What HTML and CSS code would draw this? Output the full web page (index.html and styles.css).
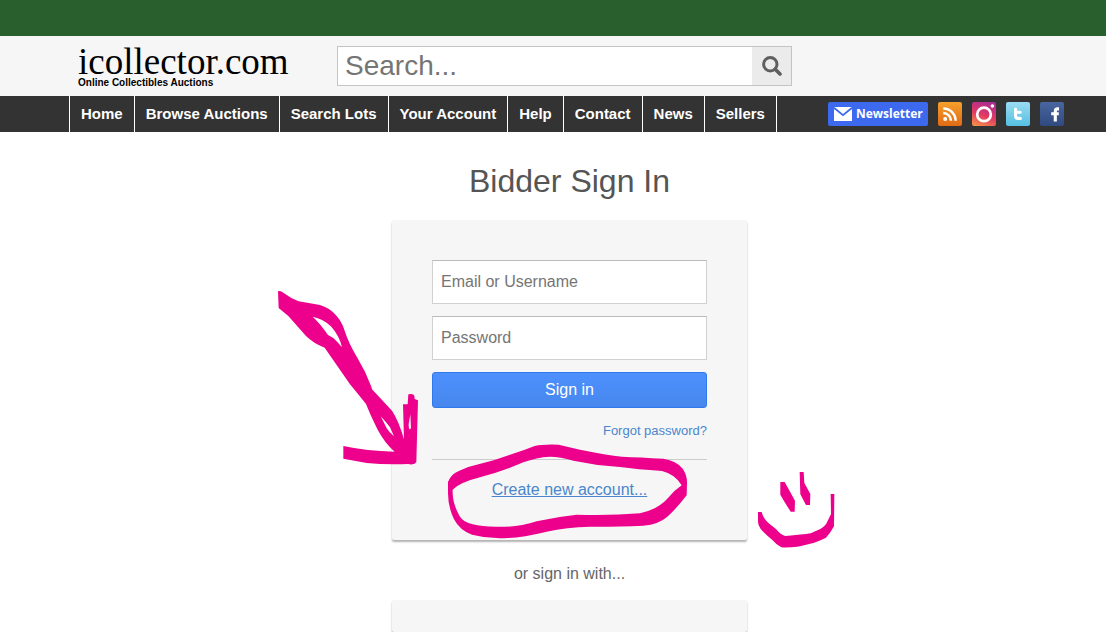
FILE: index.html
```
<!DOCTYPE html>
<html lang="en">
<head>
    <meta charset="UTF-8">
    <meta name="viewport" content="width=device-width, initial-scale=1.0">
    <title>Bidder Sign In - icollector.com</title>
    <link rel="stylesheet" href="styles.css">
</head>
<body>
    <div class="topbar"></div>

    <header class="header">
        <div class="wrap header-row">
            <a class="logo" href="#">
                <span class="logo-name">icollector.com</span>
                <span class="logo-tag">Online Collectibles Auctions</span>
            </a>
            <form class="search">
                <input type="text" placeholder="Search..." aria-label="Search">
                <button type="submit" aria-label="Search">
                    <svg width="20" height="20" viewBox="0 0 20 20">
                        <circle cx="8.3" cy="8.3" r="6.7" fill="none" stroke="#5f5f5f" stroke-width="3"/>
                        <path d="M13.2 13.2 L18 18" stroke="#5f5f5f" stroke-width="3.6" stroke-linecap="round"/>
                    </svg>
                </button>
            </form>
        </div>
    </header>

    <nav class="nav">
        <div class="wrap nav-row">
            <ul class="menu">
                <li><a href="#">Home</a></li>
                <li><a href="#">Browse Auctions</a></li>
                <li><a href="#">Search Lots</a></li>
                <li><a href="#">Your Account</a></li>
                <li><a href="#">Help</a></li>
                <li><a href="#">Contact</a></li>
                <li><a href="#">News</a></li>
                <li><a href="#">Sellers</a></li>
            </ul>
            <div class="social">
                <a class="newsletter" href="#">
                    <svg width="18" height="14" viewBox="0 0 18 14">
                        <rect width="18" height="14" fill="#fff"/>
                        <path d="M0 0.8 L9 8.2 L18 0.8" fill="none" stroke="#3c69ee" stroke-width="1.8"/>
                    </svg>
                    Newsletter
                </a>
                <a class="rss" href="#" aria-label="RSS">
                    <svg width="24" height="24" viewBox="0 0 24 24">
                        <circle cx="7.2" cy="17" r="2" fill="#fff"/>
                        <path d="M5.3 11 A7.8 7.8 0 0 1 13 18.8 M5.3 6.4 A12.4 12.4 0 0 1 17.6 18.8" fill="none" stroke="#fff" stroke-width="2.5"/>
                    </svg>
                </a>
                <a class="instagram" href="#" aria-label="Instagram">
                    <svg width="24" height="24" viewBox="0 0 24 24">
                        <circle cx="12" cy="12.4" r="6.8" fill="none" stroke="#fff" stroke-width="2.7"/>
                        <circle cx="20.4" cy="4" r="1.8" fill="#fff"/>
                    </svg>
                </a>
                <a class="twitter" href="#" aria-label="Twitter">
                    <svg width="24" height="24" viewBox="0 0 24 24">
                        <path d="M9.6 7 V14 Q9.6 16.4 12 16.4 H14.4 M9.6 10.2 H14.2" fill="none" stroke="#fff" stroke-width="3.1" stroke-linecap="round" stroke-linejoin="round"/>
                    </svg>
                </a>
                <a class="facebook" href="#" aria-label="Facebook">
                    <svg width="24" height="24" viewBox="0 0 24 24">
                        <path d="M15.3 19.4 V9.4 Q15.3 6.9 17.6 6.9 H19 M11.2 11.8 H18.8" fill="none" stroke="#fff" stroke-width="3.1"/>
                    </svg>
                </a>
            </div>
        </div>
    </nav>

    <main class="wrap content">
        <h1>Bidder Sign In</h1>

        <form class="card">
            <input type="text" placeholder="Email or Username" aria-label="Email or Username">
            <input type="password" placeholder="Password" aria-label="Password">
            <button type="submit">Sign in</button>
            <a class="forgot" href="#">Forgot password?</a>
            <hr>
            <a class="create" href="#">Create new account...</a>

            <!-- hand-drawn marker strokes over the form -->
            <svg class="marker" viewBox="0 0 1740 840">
                <!-- arrow -->
                <path fill-rule="evenodd" d="M24 34 Q32 31 40 38 Q64 56 86 64 L150 75 Q178 83 198 106 Q216 126 224 152 Q236 190 262 233 Q288 276 304 320 L306 328 L366 392 Q386 422 402 478 L399 373 L413 373 L415 343 Q430 339 433 347 L434 357 L444 361 L439 546 Q434 556 414 552 Q350 555 290 549 L220 536 L220 498 Q290 513 374 515 Q345 490 323 449 Q302 408 288 372 Q264 342 240 313 L164 203 Q130 190 108 168 L55 108 L26 84 Z
                    M128 110 Q160 116 184 140 Q209 169 216 202 Q204 187 190 174 L174 165 Q150 130 128 110 Z
                    M332 409 Q350 428 360 442 L372 469 Q358 458 350 445 Z
                    M421 403 L423 444 Q416 456 416 432 Z"/>
                <!-- loop round the account link -->
                <path transform="translate(330 240)" fill-rule="evenodd" d="M204 366 Q212 342 238 332 Q260 320 290 314 Q340 303 390 284 Q430 272 464 258 Q490 252 536 254 L600 269 Q680 285 726 290 Q780 292 850 296 Q890 302 908 326 Q922 346 921 370 L920 406 Q890 445 862 470 Q836 493 790 497 Q700 501 630 500 Q560 502 500 515 Q430 532 384 534 Q330 538 276 524 Q240 512 222 478 Q204 440 204 400 Z
                    M218 389 Q240 367 300 352 Q370 333 430 307 Q470 292 510 290 Q540 290 580 302 Q650 317 720 321 Q770 328 846 333 Q886 343 905 376 Q880 393 864 414 Q834 448 780 460 Q690 467 590 464 Q530 470 470 484 Q420 501 370 500 Q310 502 278 493 Q250 486 240 470 Q216 430 218 389 Z"/>
                <!-- smile -->
                <g transform="translate(1440 555)">
                    <path d="M91 51 H104 L135 107 L134 140 H122 Q104 112 91 89 Z"/>
                    <path d="M149 21 H161 L163 54 L181 87 L180 120 H168 L151 88 Z"/>
                    <path d="M24 141 H35 Q40 162 58 176 L78 192 Q90 208 106 213 Q158 209 182 205 L211 192 Q228 181 231 172 L243 147 L242 87 H253 L252 184 Q242 203 228 218 Q200 232 180 236 Q130 250 94 247 Q80 240 67 225 Q45 207 32 192 Q24 181 24 170 Z"/>
                </g>
            </svg>
        </form>

        <p class="or">or sign in with...</p>

        <section class="card providers"></section>
    </main>
</body>
</html>
```
FILE: styles.css
```
* {
    margin: 0;
    padding: 0;
    box-sizing: border-box;
}

body {
    display: flex;
    flex-direction: column;
    min-height: 100vh;
    background: #fff;
    color: #555;
    font-family: "Liberation Sans", Arial, Helvetica, sans-serif;
    font-size: 16px;
    line-height: 20px;
    overflow-x: hidden;
}

input,
button {
    font-family: inherit;
    font-size: 16px;
}

input::placeholder {
    color: #757575;
    opacity: 1;
}

.topbar {
    height: 36px;
    background: #285f2c;
}

.header {
    background: #f6f6f6;
}

.nav {
    background: #333;
}

/* the site column sits a little right of the middle */
.header,
.nav,
.content {
    padding-left: 33px;
}

.wrap {
    width: 100%;
    max-width: 1001px;
    margin: 0 auto;
}

/* Header */
.header-row {
    display: flex;
    align-items: center;
    height: 60px;
}

.logo {
    display: flex;
    flex-direction: column;
    width: 268px;
    padding-left: 9px;
    color: #000;
    text-decoration: none;
}

.logo-name {
    font-family: "Liberation Serif", "Times New Roman", serif;
    font-size: 37px;
    line-height: 34px;
}

.logo-tag {
    font-size: 10px;
    font-weight: bold;
    line-height: 8px;
}

.search {
    display: flex;
    width: 455px;
    height: 40px;
    border: 1px solid #c4c4c4;
}

.search input {
    flex: 1;
    min-width: 0;
    padding: 0 7px;
    border: none;
    background: #fff;
    font-size: 28px;
}

.search button {
    display: flex;
    align-items: center;
    justify-content: center;
    width: 39px;
    border: none;
    background: #ebebeb;
    cursor: pointer;
}

/* Navigation */
.nav-row {
    display: flex;
    align-items: center;
    height: 36px;
}

.menu {
    display: flex;
    list-style: none;
    border-right: 1px solid #fff;
}

.menu a {
    display: block;
    padding: 0 11px;
    border-left: 1px solid #fff;
    color: #fff;
    font-size: 15px;
    font-weight: bold;
    line-height: 36px;
    text-decoration: none;
    white-space: nowrap;
}

.social {
    display: flex;
    gap: 10px;
    margin-left: auto;
    padding-right: 6px;
}

.social a {
    width: 24px;
    height: 24px;
    border-radius: 2px;
}

.social svg {
    display: block;
}

.social .newsletter {
    display: flex;
    align-items: center;
    gap: 4px;
    width: 100px;
    padding-left: 6px;
    background: #3c69ee;
    color: #fff;
    font-family: "Open Sans", "Noto Sans", sans-serif;
    font-size: 12px;
    font-weight: bold;
    text-decoration: none;
}

.rss {
    background: linear-gradient(#f6a02c, #e06a14);
}

.instagram {
    background: linear-gradient(20deg, #f59a45, #e23a62 45%, #a32a9c);
}

.twitter {
    background: linear-gradient(#9adcf2, #55bfe2);
}

.facebook {
    background: linear-gradient(#4a66a0, #2f4a80);
}

/* Sign in */
.content {
    display: flex;
    flex: 1;
    flex-direction: column;
    align-items: center;
    max-width: 1034px;
    padding-top: 29px;
}

h1 {
    margin-bottom: 19px;
    font-size: 32px;
    font-weight: normal;
    line-height: 40px;
}

.card {
    position: relative;
    display: flex;
    flex-direction: column;
    width: 355px;
    max-width: 100%;
    padding: 40px;
    border-radius: 2px;
    background: #f6f6f6;
    box-shadow: 0 2px 2px rgba(0, 0, 0, 0.3);
}

.card input {
    width: 100%;
    height: 44px;
    margin-bottom: 12px;
    padding: 0 8px;
    border: 1px solid #d0d0d0;
    border-top-color: #bbb;
    background: #fff;
}

.card button {
    height: 36px;
    border: 1px solid #3079ed;
    border-radius: 3px;
    background: linear-gradient(#4d90fe, #4787ed);
    color: #fff;
    cursor: pointer;
}

.card a {
    color: #4a86cc;
}

.card .forgot {
    align-self: flex-end;
    margin-top: 13px;
    font-size: 13px;
    text-decoration: none;
}

.card hr {
    margin: 18px 0 20px;
    border: none;
    border-top: 1px solid #ccc;
}

.card .create {
    align-self: center;
}

.marker {
    position: absolute;
    top: 60px;
    left: -122px;
    width: 580px;
    height: 280px;
    fill: #ec008c;
    pointer-events: none;
}

.or {
    margin: 24px 0 16px;
    color: #666;
}

.providers {
    flex: 1;
    padding: 0;
}
```
